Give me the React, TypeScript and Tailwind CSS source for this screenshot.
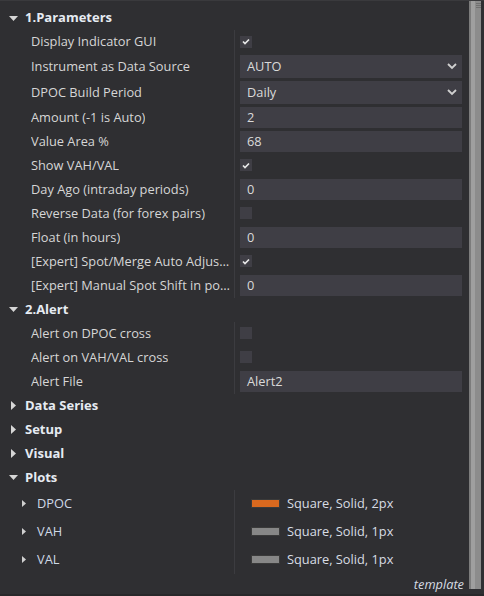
import React from 'react';

type Row =
  | { kind: 'check'; label: string; checked: boolean }
  | { kind: 'select'; label: string; value: string }
  | { kind: 'text'; label: string; value: string };

const params: Row[] = [
  { kind: 'check', label: 'Display Indicator GUI', checked: true },
  { kind: 'select', label: 'Instrument as Data Source', value: 'AUTO' },
  { kind: 'select', label: 'DPOC Build Period', value: 'Daily' },
  { kind: 'text', label: 'Amount (-1 is Auto)', value: '2' },
  { kind: 'text', label: 'Value Area %', value: '68' },
  { kind: 'check', label: 'Show VAH/VAL', checked: true },
  { kind: 'text', label: 'Day Ago (intraday periods)', value: '0' },
  { kind: 'check', label: 'Reverse Data (for forex pairs)', checked: false },
  { kind: 'text', label: 'Float (in hours)', value: '0' },
  { kind: 'check', label: '[Expert] Spot/Merge Auto Adjustment', checked: true },
  { kind: 'text', label: '[Expert] Manual Spot Shift in points', value: '0' },
];

const alerts: Row[] = [
  { kind: 'check', label: 'Alert on DPOC cross', checked: false },
  { kind: 'check', label: 'Alert on VAH/VAL cross', checked: false },
  { kind: 'text', label: 'Alert File', value: 'Alert2' },
];

const plots = [
  { name: 'DPOC', color: 'bg-[#d9691f]', desc: 'Square, Solid, 2px' },
  { name: 'VAH', color: 'bg-[#878787]', desc: 'Square, Solid, 1px' },
  { name: 'VAL', color: 'bg-[#878787]', desc: 'Square, Solid, 1px' },
];

const font = { fontFamily: '"Open Sans", "Noto Sans", sans-serif' };

const TriDown = () => (
  <svg width="9" height="5" viewBox="0 0 9 5" className="shrink-0">
    <path d="M0 0 H9 L4.5 5 Z" fill="#d6d6d6" />
  </svg>
);

const TriRight = ({ small }: { small?: boolean }) =>
  small ? (
    <svg width="4" height="7" viewBox="0 0 4 7" className="shrink-0">
      <path d="M0 0 L4 3.5 L0 7 Z" fill="#d0d0d0" />
    </svg>
  ) : (
    <svg width="5" height="9" viewBox="0 0 5 9" className="shrink-0">
      <path d="M0 0 L5 4.5 L0 9 Z" fill="#d6d6d6" />
    </svg>
  );

const Header = ({ title, open }: { title: string; open: boolean }) => (
  <div className="h-[24px] flex items-center">
    <div className="w-[25px] flex justify-center pl-[2px] pr-[1px]">
      {open ? <TriDown /> : <TriRight />}
    </div>
    <span className="text-[13px] font-bold text-[#e6ebf2]">{title}</span>
  </div>
);

const Check = ({ checked }: { checked: boolean }) => (
  <div className="w-[12px] h-[12px] bg-[#3f3e45] flex items-center justify-center">
    {checked && (
      <svg width="8" height="7" viewBox="0 0 8 7">
        <path d="M1 3.5 L3 5.5 L7 1.5" stroke="#e8e8e8" strokeWidth="1.7" fill="none" />
      </svg>
    )}
  </div>
);

const ParamRow = ({ row }: { row: Row }) => {
  const tall = row.kind === 'select';
  return (
    <div className={`flex ${tall ? 'h-[26px]' : 'h-[24px]'}`}>
      <div className="w-[235px] shrink-0 border-r border-[#3c3c40] pl-[31px] pr-[4px] flex items-center min-w-0">
        <span className="truncate text-[12.8px] text-[#d6d6d6]">{row.label}</span>
      </div>
      <div className="flex-1 pl-[5px] pr-[7px] pt-[1px] pb-[2px] flex">
        {row.kind === 'check' ? (
          <div className="flex items-center">
            <Check checked={row.checked} />
          </div>
        ) : (
          <div className="flex-1 bg-[#3f3e45] flex items-center pl-[7px] pr-[5px]">
            <span className="flex-1 text-[12.8px] text-[#dadada]">{row.value}</span>
            {row.kind === 'select' && (
              <svg width="10" height="7" viewBox="0 0 10 7">
                <path d="M1 1 L5 5 L9 1" stroke="#d0d0d0" strokeWidth="1.8" fill="none" />
              </svg>
            )}
          </div>
        )}
      </div>
    </div>
  );
};

export default function App() {
  return (
    <div
      className="w-[484px] h-[596px] bg-[#2f2f32] border-t border-[#3a3a3d] border-b-2 border-b-[#28282a] flex overflow-hidden"
      style={font}
    >
      <div className="flex-1 flex flex-col pt-[5px] min-w-0">
        <Header title="1.Parameters" open />
        {params.map((r) => (
          <ParamRow key={r.label} row={r} />
        ))}
        <Header title="2.Alert" open />
        {alerts.map((r) => (
          <ParamRow key={r.label} row={r} />
        ))}
        <Header title="Data Series" open={false} />
        <Header title="Setup" open={false} />
        <Header title="Visual" open={false} />
        <Header title="Plots" open />
        {plots.map((p) => (
          <div key={p.name} className="flex h-[28px]">
            <div className="w-[235px] shrink-0 border-r border-[#3c3c40] flex items-center pl-[22px]">
              <TriRight small />
              <span className="ml-[11px] text-[12.8px] text-[#cfd9e6]">{p.name}</span>
            </div>
            <div className="flex-1 flex items-center pl-[16px]">
              <div className={`w-[29px] h-[9px] border border-[#3a3a3a] ${p.color}`} />
              <span className="ml-[7px] text-[12.8px] text-[#d8dde4]">{p.desc}</span>
            </div>
          </div>
        ))}
        <div className="flex justify-end pr-[5px] pt-[1px]">
          <span className="italic text-[12.8px] text-[#d6dbe2]">template</span>
        </div>
      </div>
      <div className="w-[15px] shrink-0 flex pb-[5px] pr-[3px]">
        <div className="flex-1 flex">
          <div className="w-[2px] bg-[#7c7c7c]" />
          <div className="w-[4px] bg-[#9f9f9f]" />
          <div className="flex-1 bg-[#8c8c8c] flex flex-col gap-[1px] pt-[2px] pl-[1px]">
            <div className="h-[1px] w-[5px] bg-[#707070]" />
            <div className="h-[1px] w-[5px] bg-[#707070]" />
            <div className="h-[1px] w-[5px] bg-[#707070]" />
          </div>
        </div>
      </div>
    </div>
  );
}
